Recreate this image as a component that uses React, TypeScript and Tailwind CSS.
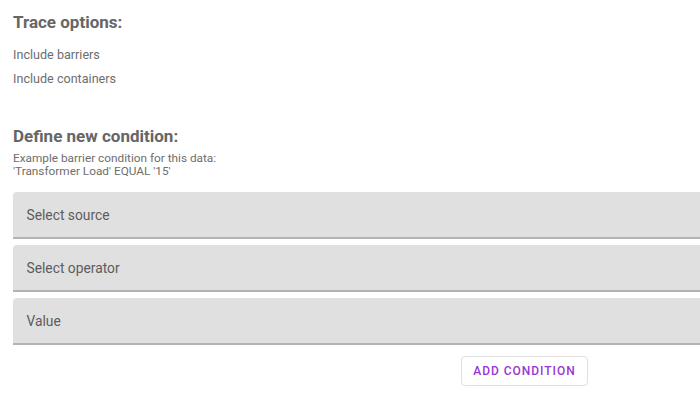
import React from 'react'

const FIELDS = ['Select source', 'Select operator', 'Value']

export default function App() {
  return (
    <div className="w-[700px] h-[400px] overflow-hidden bg-white" style={{ fontFamily: 'Roboto, "Noto Sans", sans-serif' }}>
      <div className="w-[1023px] ml-[13px] pt-[10px]">
        {/* Trace options */}
        <h2 className="text-[17px] leading-[24px] font-bold text-[#666666]">Trace options:</h2>
        <div className="mt-[8.5px] text-[12.6px] leading-[24px] text-[#6e6e6e]">
          <p>Include barriers</p>
          <p>Include containers</p>
        </div>

        {/* Define new condition */}
        <h2 className="mt-[33.5px] text-[17px] leading-[24px] font-bold text-[#666666]">Define new condition:</h2>
        <div className="mt-[3.5px] text-[11.8px] leading-[13px] text-[#6e6e6e]">
          <p>Example barrier condition for this data:</p>
          <p>'Transformer Load' EQUAL '15'</p>
        </div>

        <div className="mt-[14.5px] flex flex-col gap-[6px]">
          {FIELDS.map(f => (
            <div key={f}
              className="h-[47px] flex items-center pl-[13.5px] bg-[#e0e0e0] rounded-t-[4px] border-b-2 border-[#b3b3b3] text-[13.8px] leading-[16px] text-[#5c5c5c]">
              {f}
            </div>
          ))}
        </div>

        <div className="mt-[11px] flex justify-center">
          <button className="w-[127px] h-[30px] rounded-[4px] border border-[#e0e0e0] bg-white text-[12px] font-medium tracking-[0.08em] text-[#9836d8]">
            ADD CONDITION
          </button>
        </div>
      </div>
    </div>
  )
}
